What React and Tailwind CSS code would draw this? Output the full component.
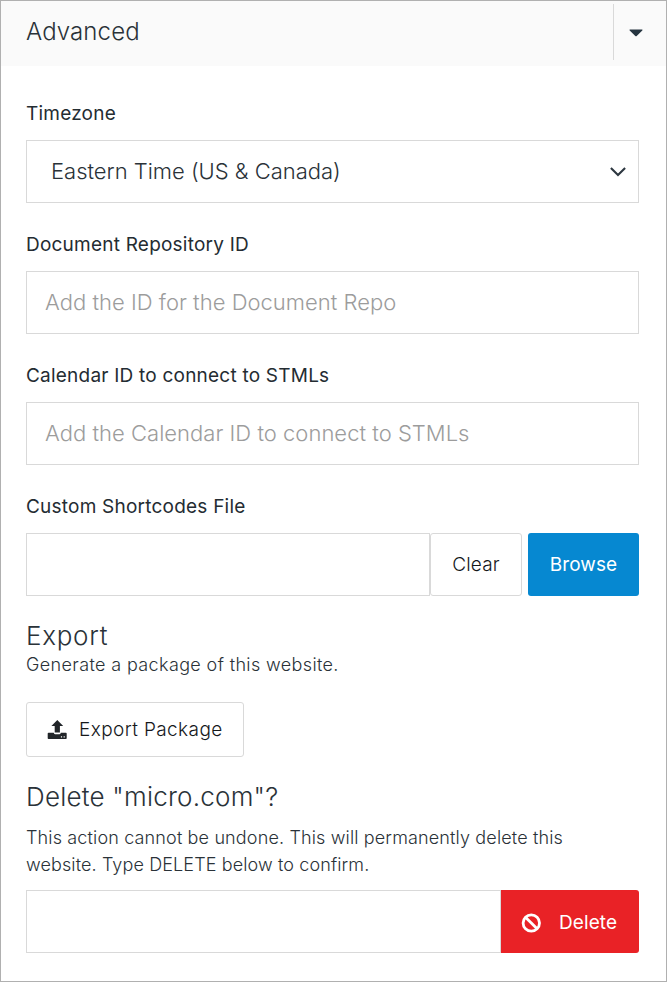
function Caret() {
  return (
    <svg width="14" height="8" viewBox="0 0 14 8" className="block">
      <path d="M1.2.5h11.600c.7 0 .9.6.5 1.100L7.700 7c-.4.4-1 .4-1.400 0L.7 1.600C.3 1.100.5.5 1.200.5z" fill="#263540" />
    </svg>
  );
}

function Chevron() {
  return (
    <svg width="16" height="10" viewBox="0 0 16 10" className="block" fill="none" stroke="#2d3740" strokeWidth="2.1">
      <path d="M.9 1l7.100 7 7.100-7" />
    </svg>
  );
}

function UploadIcon() {
  return (
    <svg width="20" height="20" viewBox="0 0 20 20" className="block">
      <path d="M10.300 0l5.900 5.900h-3.300v6.600H7.700V5.900H4.400z" fill="#212529" />
      <path
        d="M1.500 12.700h5.300c.2 1.100 1 1.500 2 1.500h3c1 0 1.800-.4 2-1.500h5.100c.5 0 .8.3.8.8v4.700c0 .5-.3.800-.8.800H1.500c-.5 0-.8-.3-.8-.8v-4.700c0-.5.3-.8.8-.8z"
        fill="#212529"
      />
      <path d="M13.900 16.300h1.200v1.200h-1.200zM16.600 16.300h1.200v1.200h-1.200z" fill="#fff" />
    </svg>
  );
}

function BanIcon() {
  return (
    <svg width="20" height="20" viewBox="0 0 20 20" className="block" fill="none" stroke="#fff" strokeWidth="2.800">
      <circle cx="10.300" cy="10" r="8.200" />
      <path d="M4.500 4.200l11.600 11.600" />
    </svg>
  );
}

function Label({ children }) {
  return <div className="h-[27px] text-[19px] leading-[27px] font-normal tracking-[0.22px] text-[#242c32]">{children}</div>;
}

function Field({ label, placeholder }) {
  return (
    <div className="mb-[28px]">
      <Label>{label}</Label>
      <div className="mt-[13px] flex h-[63px] items-center border border-[#d9d9d9] pl-[18px] text-[22px] font-light tracking-[0.02px] text-[#9c9c9c]">
        {placeholder}
      </div>
    </div>
  );
}

export default function App() {
  return (
    <div className="h-[982px] w-[667px] border border-[#b0b0b0] bg-white font-['Inter',sans-serif] text-[#2a3238]">
      <header className="flex h-[65px] bg-[#fafafa] pl-[25px]">
        <h2 className="flex-1 pt-[13px] text-[24px] leading-[36px] font-light tracking-[0.12px]">Advanced</h2>
        <button className="mt-[3px] flex h-[56px] w-[53px] items-center justify-center border-l border-[#d9d9d9] pt-px pr-[9px]">
          <Caret />
        </button>
      </header>

      <main className="pt-[34px] pr-[27px] pl-[25px]">
        <div className="mb-[28px]">
          <Label>Timezone</Label>
          <div className="mt-[13px] flex h-[63px] items-center justify-between border border-[#d9d9d9] pr-[12px] pl-[24px] text-[22px] font-light">
            <span className="tracking-[-0.02px]">Eastern Time (US &amp; Canada)</span>
            <Chevron />
          </div>
        </div>
        <Field label="Document Repository ID" placeholder="Add the ID for the Document Repo" />
        <Field label="Calendar ID to connect to STMLs" placeholder="Add the Calendar ID to connect to STMLs" />

        <Label>Custom Shortcodes File</Label>
        <div className="mt-[13px] flex h-[63px]">
          <div className="flex-1 border border-[#d9d9d9]" />
          <button className="w-[92px] rounded-[3px] border border-[#d9d9d9] pt-[2px] text-[19px] font-light tracking-[0.15px] text-[#15181b]">Clear</button>
          <button className="ml-[6px] w-[111px] rounded-[3px] bg-[#0688d1] pt-[2px] text-[19px] font-normal tracking-[0.1px] text-white">Browse</button>
        </div>

        <h3 className="mt-[22px] text-[26px] leading-[36px] font-light tracking-[0.72px]">Export</h3>
        <p className="text-[18px] leading-[22px] font-light tracking-[0.37px]">Generate a package of this website.</p>
        <button className="mt-[26px] flex h-[55px] w-[218px] items-center rounded-[3px] border border-[#d9d9d9] pl-[20px] text-[19px] font-light text-[#15181b]">
          <UploadIcon />
          <span className="ml-[12px] pt-[2px] tracking-[0.39px]">Export Package</span>
        </button>

        <h3 className="mt-[22px] text-[26px] leading-[36px] font-light tracking-[0.22px]">Delete "micro.com"?</h3>
        <p className="mt-[9px] text-[18px] leading-[27px] font-light tracking-[0.145px]">
          This action cannot be undone. This will permanently delete this
          <br />
          <span className="tracking-[0.115px]">website. Type DELETE below to confirm.</span>
        </p>
        <div className="mt-[12px] flex h-[63px]">
          <div className="flex-1 border border-[#d9d9d9]" />
          <button className="flex w-[138px] items-center rounded-r-[3px] bg-[#e92226] pt-[2px] pl-[20px] text-[19px] text-white">
            <BanIcon />
            <span className="ml-[18px] pt-[2px] tracking-[0.1px]">Delete</span>
          </button>
        </div>
      </main>
    </div>
  );
}
